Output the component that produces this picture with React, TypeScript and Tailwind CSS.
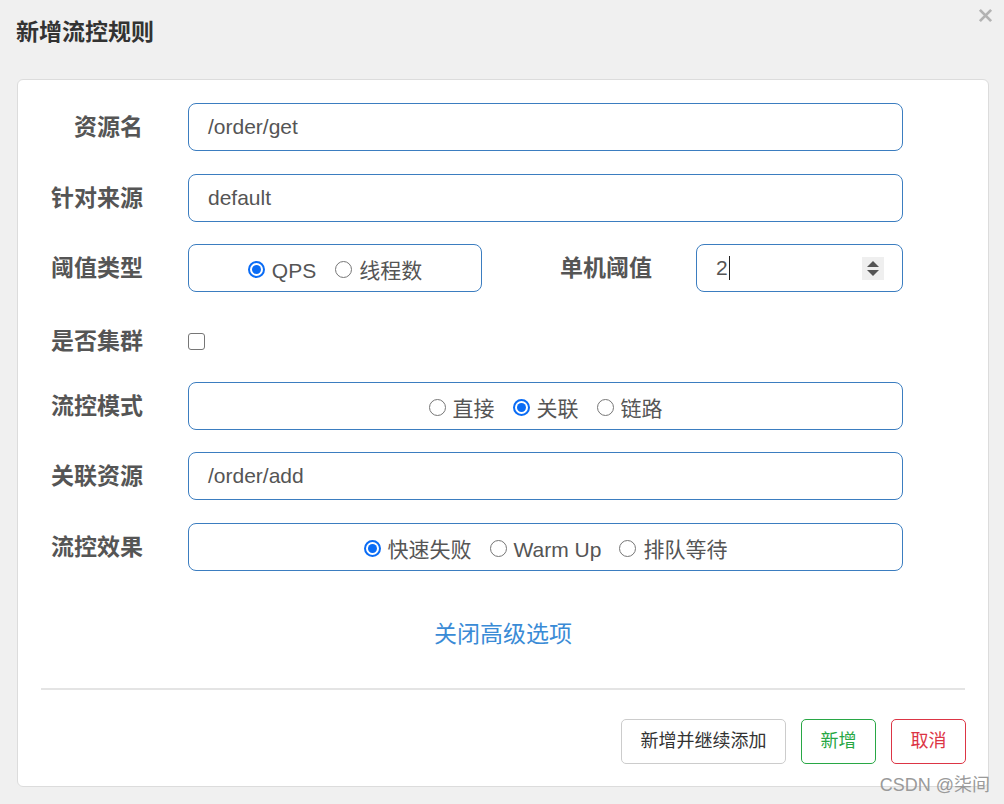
import type { ReactNode } from "react";

const FONT = { fontFamily: '"Liberation Sans", Arial, "Noto Sans CJK SC", sans-serif' };

function Radio({ checked, label }: { checked?: boolean; label: string }) {
  return (
    <span className="inline-flex items-center gap-[7px]">
      {checked ? (
        <span className="-mt-[3px] flex h-[17px] w-[17px] items-center justify-center rounded-full border-[2px] border-[#0a6cf5] bg-white">
          <span className="h-[9px] w-[9px] rounded-full bg-[#0a6cf5]" />
        </span>
      ) : (
        <span className="-mt-[3px] h-[17px] w-[17px] rounded-full border border-[#767676] bg-white" />
      )}
      <span>{label}</span>
    </span>
  );
}

function Row({ label, children, className = "" }: { label: string; children: ReactNode; className?: string }) {
  return (
    <div className={`flex items-center ${className}`}>
      <div className="w-[125px] shrink-0 text-right text-[23px] font-bold text-[#555]">{label}</div>
      <div className="ml-[45px] flex flex-1 items-center">{children}</div>
    </div>
  );
}

const box = "h-[48px] rounded-[8px] border border-[#3b7dc0] bg-white text-[21px] text-[#555]";

export default function App() {
  return (
    <div className="relative h-[804px] w-[1004px] overflow-hidden bg-[#f0f0f0]" style={FONT}>
      <div className="flex h-[64px] items-center pl-[16px] pt-[1px]">
        <h1 className="text-[23px] font-bold text-[#333]">新增流控规则</h1>
      </div>
      <button className="absolute right-[11px] top-[8px] text-[#b3b3b3]">
        <svg className="h-[15px] w-[15px]" viewBox="0 0 16 16" fill="none" stroke="currentColor" strokeWidth={3}>
          <path d="M2 2l12 12M14 2L2 14" />
        </svg>
      </button>

      <div className="mx-[17px] mt-[15px] h-[708px] w-[972px] rounded-[6px] border border-[#dcdcdc] bg-white">
        <div className="flex flex-col gap-[22px] pr-[85px] pt-[23px]">
          <Row label="资源名">
            <div className={`${box} flex w-full items-center px-[19px]`}>/order/get</div>
          </Row>
          <Row label="针对来源" className="mt-[1px]">
            <div className={`${box} flex w-full items-center px-[19px]`}>default</div>
          </Row>
          <Row label="阈值类型">
            <div className={`${box} flex w-[294px] items-center justify-center gap-[19px] pt-[6px]`}>
              <Radio checked label="QPS" />
              <Radio label="线程数" />
            </div>
            <div className="ml-[76px] w-[94px] shrink-0 text-right text-[23px] font-bold text-[#555]">单机阈值</div>
            <div className={`${box} ml-[44px] flex flex-1 items-center pl-[19px] pr-[18px]`}>
              <span>2</span>
              <span className="ml-[1px] h-[24px] w-px bg-[#222]" />
              <span className="ml-auto flex h-[23px] w-[22px] flex-col items-center justify-center gap-[3px] bg-[#efefef]">
                <svg width="12" height="6" viewBox="0 0 12 6"><path d="M6 0L12 6H0z" fill="#555" /></svg>
                <svg width="12" height="6" viewBox="0 0 12 6"><path d="M0 0H12L6 6z" fill="#555" /></svg>
              </span>
            </div>
          </Row>
          <Row label="是否集群" className="h-[46px] pt-[9px]">
            <span className="h-[17px] w-[17px] rounded-[3px] border border-[#767676] bg-white" />
          </Row>
          <Row label="流控模式">
            <div className={`${box} flex w-full items-center justify-center gap-[18px] pt-[6px]`}>
              <Radio label="直接" />
              <Radio checked label="关联" />
              <Radio label="链路" />
            </div>
          </Row>
          <Row label="关联资源">
            <div className={`${box} flex w-full items-center px-[19px]`}>/order/add</div>
          </Row>
          <Row label="流控效果" className="mt-[1px]">
            <div className={`${box} flex w-full items-center justify-center gap-[18px] pt-[6px]`}>
              <Radio checked label="快速失败" />
              <Radio label="Warm Up" />
              <Radio label="排队等待" />
            </div>
          </Row>
        </div>

        <div className="mt-[46px] text-center text-[23px] text-[#3a8bd6]">关闭高级选项</div>

        <div className="mx-[23px] mt-[36px] h-[2px] bg-[#e4e4e4]" />

        <div className="mt-[29px] flex justify-end gap-[15px] pr-[22px] text-[18px]">
          <button className="h-[45px] w-[165px] rounded-[5px] border border-[#cccccc] bg-white text-[#333]">新增并继续添加</button>
          <button className="h-[45px] w-[75px] rounded-[5px] border border-[#28a745] bg-white text-[#28a745]">新增</button>
          <button className="h-[45px] w-[75px] rounded-[5px] border border-[#dc3545] bg-white text-[#dc3545]">取消</button>
        </div>
      </div>

      <div className="absolute bottom-[5px] right-[14px] text-[18px] text-[#9a9a9a]">CSDN @柒间</div>
    </div>
  );
}
